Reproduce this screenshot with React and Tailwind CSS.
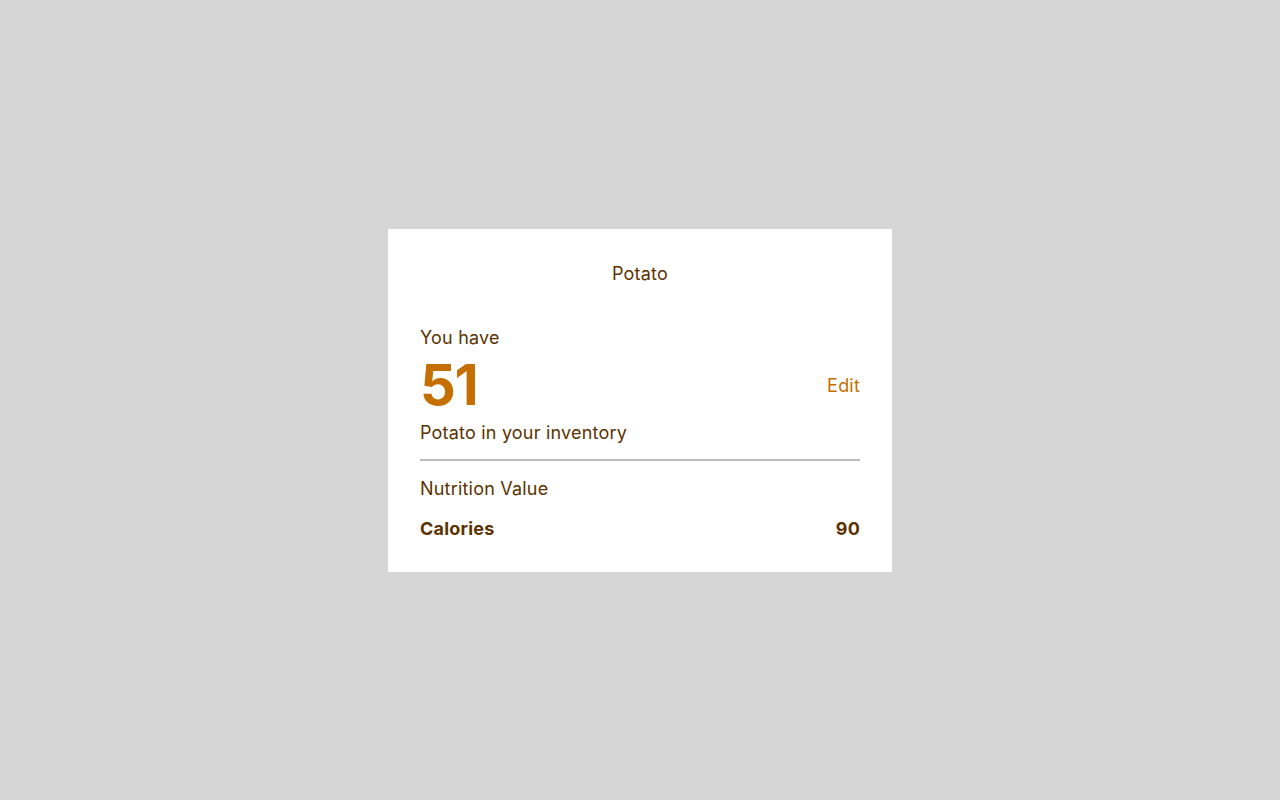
export default function App() {
  return (
    <div className="min-h-screen w-full bg-[#d6d6d6] flex items-center justify-center" style={{ fontFamily: "Inter, 'Noto Sans', sans-serif" }}>
      <div className="w-[504px] bg-white pt-[33px] pb-[31px] px-8 text-[#5c3300] tracking-[0.2px]">
        <div className="text-center text-lg leading-6">Potato</div>
        <div className="mt-10 text-lg leading-6">You have</div>
        <div className="flex items-center justify-between h-[71px]">
          <span className="text-[56px] leading-[71px] font-bold text-[#c46f00] tracking-tight">51</span>
          <button className="text-lg leading-6 text-[#c46f00] pt-[2px]">Edit</button>
        </div>
        <div className="text-lg leading-6">Potato in your inventory</div>
        <div className="mt-[14px] h-[2px] bg-[#bdbdbd]" />
        <div className="mt-4 text-lg leading-6">Nutrition Value</div>
        <div className="mt-4 flex justify-between text-lg leading-6 font-bold">
          <span>Calories</span>
          <span>90</span>
        </div>
      </div>
    </div>
  );
}
